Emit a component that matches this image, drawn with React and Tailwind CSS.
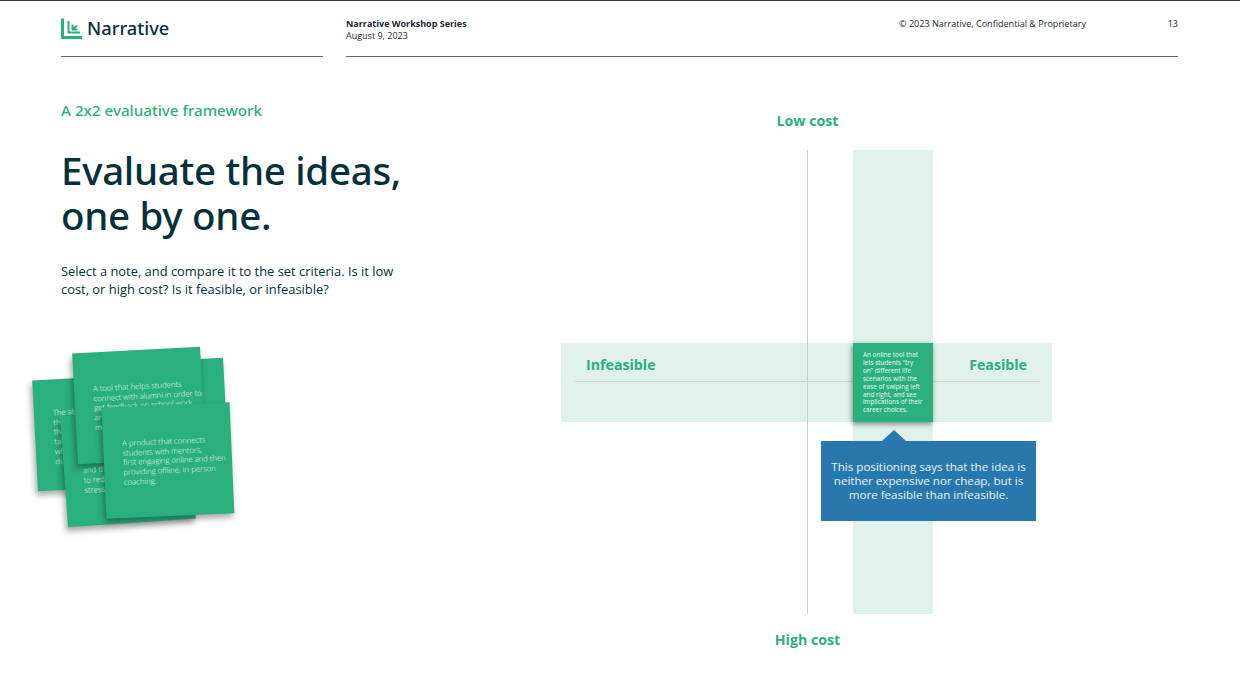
import React from 'react';

const SANS = "font-['Open_Sans',sans-serif]";
const HEAD = "font-['Noto_Sans',sans-serif]";

function Logo() {
  return (
    <div className="flex items-center gap-[5px]">
      <svg width="21" height="21" viewBox="0 0 21 21" fill="none" stroke="#2ab07f" strokeLinejoin="round">
        <path d="M1.5 0.5 V19.5 H21" strokeWidth="3" />
        <path d="M7.5 3 V14.5 H19" strokeWidth="2" />
        <path d="M11.5 6.5 V11.5 H16.5 M11.5 11.5 L16 7.5" strokeWidth="1.9" />
      </svg>
      <span className={`${HEAD} text-[18.3px] leading-none font-medium text-[#06303a]`}>
        Narrative
      </span>
    </div>
  );
}

function Header() {
  return (
    <header className={`flex gap-[23px] pr-[62px] pl-[61px] text-[#1b2a30] ${SANS}`}>
      <div className="flex h-[56px] w-[262px] items-start border-b border-[#666] pt-[17px]">
        <Logo />
      </div>
      <div className="flex h-[56px] flex-1 items-start justify-between border-b border-[#666] pt-[17px] text-[9px] leading-[11.5px]">
        <div>
          <div className="font-bold">Narrative Workshop Series</div>
          <div>August 9, 2023</div>
        </div>
        <div className="flex w-[279px] justify-between text-[9.05px]">
          <span>© 2023 Narrative, Confidential &amp; Proprietary</span>
          <span>13</span>
        </div>
      </div>
    </header>
  );
}

function Note({ className, children }) {
  return (
    <div className={`absolute h-[111px] w-[128px] bg-[#2ab07f] pl-[19px] text-[7.7px] leading-[9.7px] font-light whitespace-nowrap text-white/85 shadow-[-2px_4px_6px_rgba(0,0,0,0.35)] ${className}`}>
      {children}
    </div>
  );
}

function NotePile() {
  return (
    <div className={`relative mt-[42px] -ml-[61px] h-[200px] w-[260px] ${SANS}`}>
      <Note className="top-[37px] left-[35px] -rotate-3 pt-[29px]">
        The ability for students<br />the<br />the<br />tak<br />wh<br />dur
      </Note>
      <Note className="top-[21px] left-[98px] -rotate-3" />
      <Note className="top-[72px] left-[64px] -rotate-[4deg] pt-[32px]">
        <br />
        <br />
        and the<br />to reduce<br />stress-
      </Note>
      <Note className="top-[10px] left-[75px] -rotate-3 pt-[32px]">
        A tool that helps students<br />connect with alumni in order to<br />get feedback on school work<br />and<br />mo
      </Note>
      <Note className="top-[65px] left-[104px] -rotate-[2.5deg] pt-[32px]">
        A product that connects<br />students with mentors,<br />first engaging online and then<br />providing offline, in-person<br />coaching.
      </Note>
    </div>
  );
}

function Matrix() {
  return (
    <div className={`mt-[53px] flex w-[491px] flex-col items-center text-[14.2px] leading-[20px] font-bold text-[#2ab07f] ${SANS}`}>
      <div className="h-[40px] pt-[1px] pl-[2px]">Low cost</div>
      <div className="relative h-[464px] w-full">
        <div className="absolute inset-y-0 left-[292px] w-[80px] bg-[#dff1ea]" />
        <div className="absolute top-[193px] flex h-[79px] w-full items-start justify-between bg-[#dff1ea] pt-[12px] pr-[25px] pl-[25px]">
          <span>Infeasible</span>
          <span>Feasible</span>
        </div>
        <div className="absolute inset-y-0 left-[246px] w-px bg-[#c8cfc8]" />
        <div className="absolute top-[231px] left-[14px] h-px w-[465px] bg-[#c8d8cc]" />

        <div className="absolute top-[193px] left-[292px] h-[79px] w-[80px] bg-[#2ab07f] pt-[8px] pl-[10px] text-[6.4px] leading-[7.9px] font-normal whitespace-nowrap text-white/90 shadow-[-1px_2px_5px_rgba(0,0,0,0.45)]">
          An online tool that<br />lets students “try<br />on” different life<br />scenarios with the<br />ease of swiping left<br />and right, and see<br />implications of their<br />career choices.
        </div>

        <div className="absolute top-[280px] left-[260px] flex w-[215px] flex-col items-center">
          <div className="-ml-[70px] h-0 w-0 border-x-[12px] border-b-[11px] border-x-transparent border-b-[#2878ae]" />
          <div className="flex h-[80px] w-full items-center justify-center bg-[#2878ae] px-[8px] text-center text-[11.6px] leading-[14px] font-normal text-white/90">
            <p>This positioning says that the idea is neither expensive nor cheap, but is more feasible than infeasible.</p>
          </div>
        </div>
      </div>
      <div className="pt-[16px] pl-[2px]">High cost</div>
    </div>
  );
}

export default function App() {
  return (
    <div className="h-[697px] w-[1240px] overflow-hidden border-t border-[#333] bg-white">
      <Header />
      <main className="flex justify-between pr-[188px] pl-[61px]">
        <section className="w-[350px]">
          <h2 className={`mt-[42px] ${HEAD} text-[15.2px] leading-[22px] font-medium text-[#2ab07f]`}>
            A 2x2 evaluative framework
          </h2>
          <h1 className={`mt-[27px] ${HEAD} text-[38.5px] leading-[45px] font-medium tracking-[-0.3px] text-[#06303a]`}>
            Evaluate the ideas,<br />one by one.
          </h1>
          <p className={`mt-[24px] text-[12.9px] leading-[18px] text-[#06303a] ${SANS}`}>
            Select a note, and compare it to the set criteria. Is it low cost, or high cost? Is it feasible, or infeasible?
          </p>
          <NotePile />
        </section>
        <Matrix />
      </main>
    </div>
  );
}
